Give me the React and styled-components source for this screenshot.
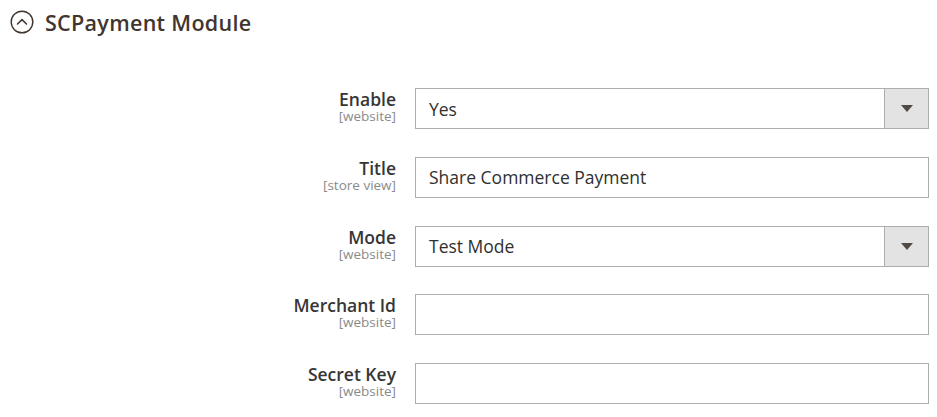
import React from 'react';
import styled, { createGlobalStyle } from 'styled-components';

const GlobalStyle = createGlobalStyle`
  body {
    margin: 0;
    background: #fff;
    font-family: 'Open Sans', 'Noto Sans', sans-serif;
    color: #303030;
  }
`;

const Section = styled.div`
  padding: 0 8px 0 10px;
`;

const Header = styled.div`
  display: flex;
  align-items: center;
  gap: 11px;
  height: 44px;
`;

const Title = styled.h2`
  margin: 0;
  font-size: 21.5px;
  font-weight: 600;
  color: #41362f;
  letter-spacing: 0.3px;
`;

const Form = styled.div`
  display: flex;
  flex-direction: column;
  gap: 27.75px;
  margin-top: 44px;
`;

const Row = styled.div`
  display: grid;
  grid-template-columns: 386px 514px;
  column-gap: 19px;
`;

const LabelCell = styled.div`
  text-align: right;
  padding-top: 1px;
`;

const Label = styled.div`
  font-size: 17.5px;
  font-weight: 600;
  line-height: 20px;
  color: #363636;
`;

const Scope = styled.div`
  font-size: 13.5px;
  line-height: 15px;
  color: #8a8a8a;
`;

const Field = styled.div`
  display: flex;
  height: 41px;
  box-sizing: border-box;
  border: 1px solid #adadad;
  background: #fff;
`;

const Value = styled.div`
  flex: 1;
  display: flex;
  align-items: center;
  padding-left: 13px;
  font-size: 17.5px;
  color: #303030;
`;

const Toggle = styled.div`
  width: 42px;
  display: flex;
  align-items: center;
  justify-content: center;
  background: #e3e3e3;
  border-left: 1px solid #adadad;
  padding-left: 1px;
  &::after {
    content: '';
    border-left: 6px solid transparent;
    border-right: 6px solid transparent;
    border-top: 7px solid #514943;
  }
`;

const CollapseIcon = () => (
  <svg width="24" height="24" viewBox="0 0 24 24" fill="none">
    <circle cx="12" cy="12" r="10.8" stroke="#41362f" strokeWidth="1.4" />
    <path d="M7.5 14 L12 9.6 L16.5 14" stroke="#41362f" strokeWidth="1.5" strokeLinecap="round" strokeLinejoin="round" />
  </svg>
);

const fields = [
  { label: 'Enable', scope: '[website]', value: 'Yes', select: true },
  { label: 'Title', scope: '[store view]', value: 'Share Commerce Payment' },
  { label: 'Mode', scope: '[website]', value: 'Test Mode', select: true },
  { label: 'Merchant Id', scope: '[website]', value: '' },
  { label: 'Secret Key', scope: '[website]', value: '' },
];

export default function App() {
  return (
    <Section>
      <GlobalStyle />
      <Header>
        <CollapseIcon />
        <Title>SCPayment Module</Title>
      </Header>
      <Form>
        {fields.map((f) => (
          <Row key={f.label}>
            <LabelCell>
              <Label>{f.label}</Label>
              <Scope>{f.scope}</Scope>
            </LabelCell>
            <Field>
              <Value>{f.value}</Value>
              {f.select && <Toggle />}
            </Field>
          </Row>
        ))}
      </Form>
    </Section>
  );
}
